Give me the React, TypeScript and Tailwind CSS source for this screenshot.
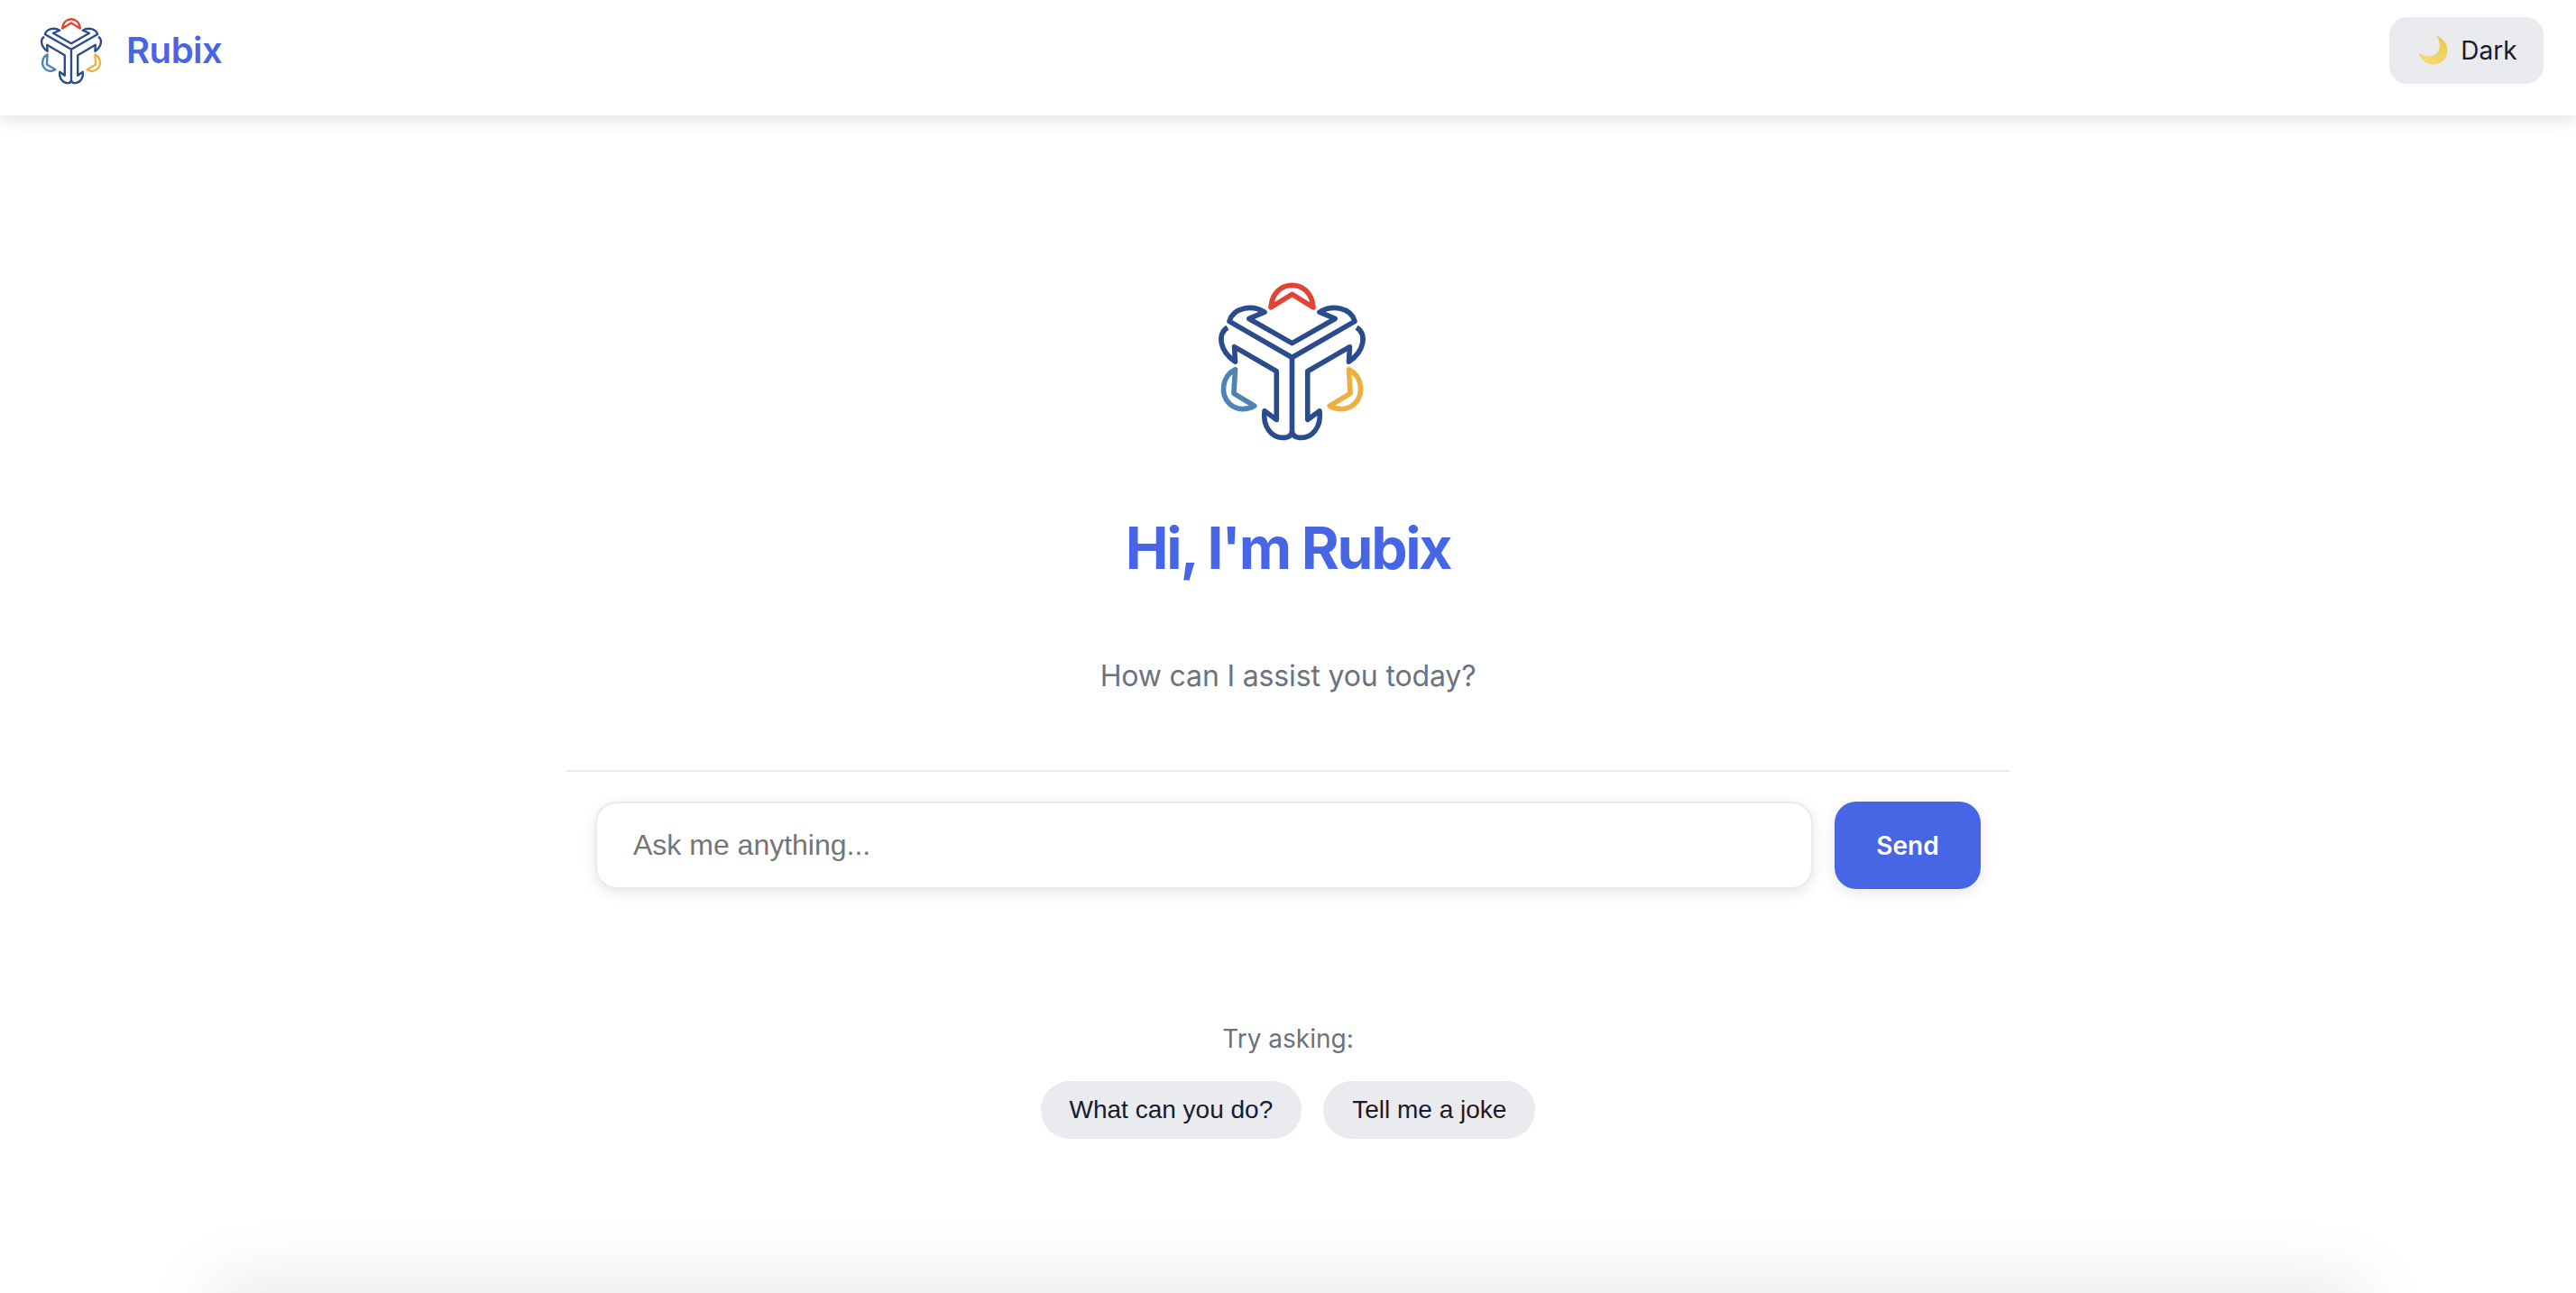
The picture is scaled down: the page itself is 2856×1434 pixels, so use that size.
import React from 'react';

// logo is a trace of the reference mark, coordinates are in the traced crop
const RubixLogo = ({ className }: { className: string }) => (
  <svg className={className} viewBox="150 60 504 540" fill="none" strokeWidth={17} strokeLinejoin="round" strokeLinecap="butt">
    <path stroke="#2B4C8C" d="M310 166C268 140 205 150 192 197L402 318L612 197C599 150 536 140 494 166L546 188L402 270L258 188Z" />
    <path stroke="#2B4C8C" d="M186 217C152 240 158 295 212 332L209 282L350 364V526L310 497C303 550 335 590 378 586C392 585 400 576 402 566C404 576 412 585 426 586C469 590 501 550 494 497L454 526V364L595 282L592 332C646 295 652 240 618 217" />
    <path stroke="#2B4C8C" d="M402 322V566" />
    <path stroke="#E04434" d="M331 150C335 100 368 76 402 76C436 76 469 100 473 150L402 106Z" />
    <path stroke="#4E83B3" d="M212 358C168 380 160 440 192 472C216 496 250 494 276 480L207 438Z" />
    <path stroke="#EDB040" d="M592 358C636 380 644 440 612 472C588 496 554 494 528 480L597 438Z" />
  </svg>
);

const Moon = () => (
  <svg className="w-[32px] h-[32px]" viewBox="0 0 32 32">
    <defs>
      <linearGradient id="moonFill" x1="0" y1="1" x2="1" y2="0">
        <stop offset="0" stopColor="#F9DE76" />
        <stop offset="1" stopColor="#EFC64C" />
      </linearGradient>
    </defs>
    <path fill="url(#moonFill)" stroke="#E9C25A" strokeWidth={0.6} d="M20 0C28 4 31 10 31 16C31 25 24 31 15 31C9 31 3 27 0 19C5 23 11 24 16 22C23 19 26 9 20 0Z" />
  </svg>
);

const chips = ['What can you do?', 'Tell me a joke'];

const App = () => {
  return (
    <div className="h-screen overflow-hidden bg-white flex flex-col font-['Inter',sans-serif]">
      <header className="h-[128px] shrink-0 bg-white flex justify-between items-start pt-[19px] pl-[44px] pr-[36px] shadow-[0_4px_20px_rgba(0,0,0,0.12)] relative z-10">
        <div className="h-[74px] flex items-center gap-[26px]">
          <RubixLogo className="w-[70px] h-[75px]" />
          <h1 className="text-[40px] font-semibold text-[#4666E5] leading-none tracking-[-0.012em]">Rubix</h1>
        </div>
        <button className="w-[171px] h-[74px] pl-[4px] rounded-[20px] bg-[#EAEBEF] text-[#1A1A2E] text-[28px] flex items-center justify-center gap-[14px]">
          <Moon />
          <span>Dark</span>
        </button>
      </header>

      <main className="flex-1 flex flex-col items-center">
        <RubixLogo className="w-[167px] h-[179px] ml-[8px] mt-[183px] shrink-0" />
        <h2 className="mt-[70px] text-[64px] leading-[96px] font-bold text-[#4666E5] tracking-[-0.035em]">Hi, I'm Rubix</h2>
        <p className="mt-[70px] text-[32px] leading-[48px] text-[#6B7280] tracking-[-0.15px]">How can I assist you today?</p>

        <div className="mt-[80px] w-[1600px] border-t-2 border-[#EAEBEF] pt-[33px] px-[32px] flex gap-[24px]">
          <input
            placeholder="Ask me anything..."
            className="flex-1 h-[97px] rounded-[24px] border-2 border-[#EAEBEF] bg-white px-[40px] text-[32px] font-['Liberation_Sans',sans-serif] placeholder:text-[#757575] shadow-[0_4px_16px_rgba(0,0,0,0.1)] outline-none"
          />
          <button className="w-[162px] h-[97px] rounded-[24px] bg-[#4666E5] text-white text-[28px] font-semibold shadow-[0_4px_16px_rgba(0,0,0,0.1)]">Send</button>
        </div>

        <p className="mt-[145px] text-[28px] leading-[42px] text-[#6B7280]">Try asking:</p>
        <div className="mt-[26px] flex gap-[24px]">
          {chips.map((chip) => (
            <button key={chip} className="h-[64px] px-[32px] rounded-full bg-[#EAEBEF] text-[#1A1A2E] text-[28px] font-['Liberation_Sans',sans-serif]">
              {chip}
            </button>
          ))}
        </div>

        <div className="mt-[172px] w-[2400px] h-[60px] shrink-0 rounded-[40px] bg-[#EAEAEA] shadow-[0_-10px_80px_rgba(0,0,0,0.11)]" />
      </main>
    </div>
  );
};

export default App;
